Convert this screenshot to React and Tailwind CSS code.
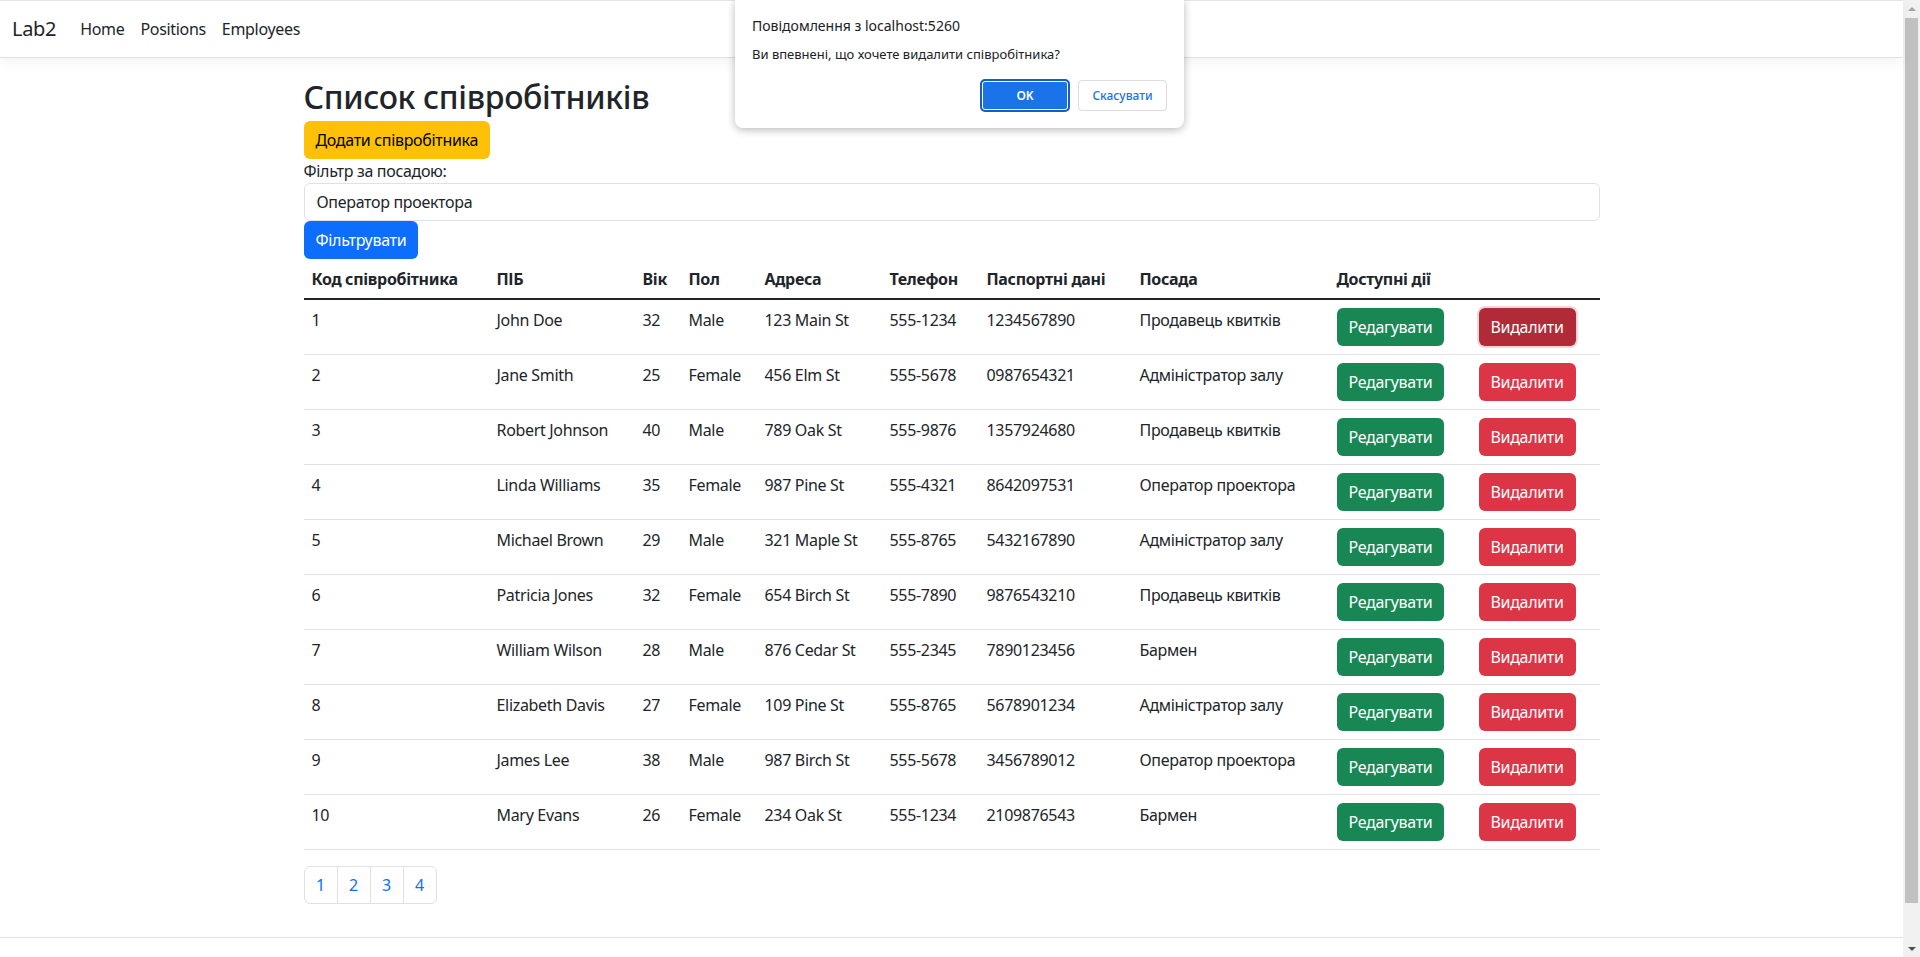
import React from "react";

const employees = [
  { id: 1, name: "John Doe", age: 32, sex: "Male", address: "123 Main St", phone: "555-1234", passport: "1234567890", position: "Продавець квитків" },
  { id: 2, name: "Jane Smith", age: 25, sex: "Female", address: "456 Elm St", phone: "555-5678", passport: "0987654321", position: "Адміністратор залу" },
  { id: 3, name: "Robert Johnson", age: 40, sex: "Male", address: "789 Oak St", phone: "555-9876", passport: "1357924680", position: "Продавець квитків" },
  { id: 4, name: "Linda Williams", age: 35, sex: "Female", address: "987 Pine St", phone: "555-4321", passport: "8642097531", position: "Оператор проектора" },
  { id: 5, name: "Michael Brown", age: 29, sex: "Male", address: "321 Maple St", phone: "555-8765", passport: "5432167890", position: "Адміністратор залу" },
  { id: 6, name: "Patricia Jones", age: 32, sex: "Female", address: "654 Birch St", phone: "555-7890", passport: "9876543210", position: "Продавець квитків" },
  { id: 7, name: "William Wilson", age: 28, sex: "Male", address: "876 Cedar St", phone: "555-2345", passport: "7890123456", position: "Бармен" },
  { id: 8, name: "Elizabeth Davis", age: 27, sex: "Female", address: "109 Pine St", phone: "555-8765", passport: "5678901234", position: "Адміністратор залу" },
  { id: 9, name: "James Lee", age: 38, sex: "Male", address: "987 Birch St", phone: "555-5678", passport: "3456789012", position: "Оператор проектора" },
  { id: 10, name: "Mary Evans", age: 26, sex: "Female", address: "234 Oak St", phone: "555-1234", passport: "2109876543", position: "Бармен" },
];

const Navbar = () => (
  <nav className="border-t border-t-[#e5e5e5] border-b border-b-[#dee2e6] bg-white shadow-[0_4px_12px_rgba(0,0,0,0.05)] tracking-[-0.02em]">
    <div className="flex items-center h-[56px] px-3">
      <span className="text-[20px] leading-[30px] text-[#212529] mr-4">Lab2</span>
      <a className="px-2 text-[#212529] leading-6">Home</a>
      <a className="px-2 text-[#212529] leading-6">Positions</a>
      <a className="px-2 text-[#212529] leading-6">Employees</a>
    </div>
  </nav>
);

const ConfirmDialog = () => (
  <div className="absolute left-[735px] top-0 w-[449px] h-[128px] bg-white rounded-b-lg shadow-[0_2px_8px_rgba(0,0,0,0.28)] px-[17px] font-['Segoe_UI','Noto_Sans',sans-serif]">
    <div className="pt-[16px] text-[14px] leading-[20px] text-[#202124]">
      Повідомлення з localhost:5260
    </div>
    <div className="pt-[9px] text-[13px] leading-[18px] text-[#202124]">
      Ви впевнені, що хочете видалити співробітника?
    </div>
    <div className="flex justify-end items-center gap-2 mt-[16px]">
      <button className="w-[90px] h-[33px] rounded-[5px] border-2 border-[#1a5dc2] bg-[#1a73e8] shadow-[inset_0_0_0_1px_white] text-white text-[12px] font-semibold">
        OK
      </button>
      <button className="w-[89px] h-[31px] rounded-[4px] border border-[#dadce0] bg-white text-[#1a73e8] text-[12px] font-medium">
        Скасувати
      </button>
    </div>
  </div>
);

const EmployeesTable = () => (
  <table className="w-full border-collapse text-[16px] leading-6 text-[#212529]">
    <thead>
      <tr className="border-b-2 border-[#212529]">
        <th className="w-[185px] px-2 pt-2 pb-[7px] text-left font-bold">Код співробітника</th>
        <th className="w-[146px] px-2 pt-2 pb-[7px] text-left font-bold">ПІБ</th>
        <th className="w-[46px] px-2 pt-2 pb-[7px] text-left font-bold">Вік</th>
        <th className="w-[76px] px-2 pt-2 pb-[7px] text-left font-bold">Пол</th>
        <th className="w-[125px] px-2 pt-2 pb-[7px] text-left font-bold">Адреса</th>
        <th className="w-[97px] px-2 pt-2 pb-[7px] text-left font-bold">Телефон</th>
        <th className="w-[153px] px-2 pt-2 pb-[7px] text-left font-bold">Паспортні дані</th>
        <th className="w-[197px] px-2 pt-2 pb-[7px] text-left font-bold">Посада</th>
        <th className="w-[142px] px-2 pt-2 pb-[7px] text-left font-bold">Доступні дії</th>
        <th className="w-[129px] px-2 pt-2 pb-[7px] text-left font-bold"></th>
      </tr>
    </thead>
    <tbody>
      {employees.map((emp, idx) => (
        <tr key={emp.id} className="border-b border-[#dee2e6] align-top">
          <td className="px-2 py-2">{emp.id}</td>
          <td className="px-2 py-2">{emp.name}</td>
          <td className="px-2 py-2">{emp.age}</td>
          <td className="px-2 py-2">{emp.sex}</td>
          <td className="px-2 py-2">{emp.address}</td>
          <td className="px-2 py-2">{emp.phone}</td>
          <td className="px-2 py-2">{emp.passport}</td>
          <td className="px-2 py-2">{emp.position}</td>
          <td className="px-2 py-2">
            <button className="h-[38px] px-3 rounded-[6px] bg-[#198754] text-white leading-6">
              Редагувати
            </button>
          </td>
          <td className="px-2 py-2">
            {idx === 0 ? (
              <button className="h-[38px] px-3 rounded-[6px] bg-[#b02a37] text-white leading-6 shadow-[0_0_0_2px_rgba(225,83,97,0.25)]">
                Видалити
              </button>
            ) : (
              <button className="h-[38px] px-3 rounded-[6px] bg-[#dc3545] text-white leading-6">
                Видалити
              </button>
            )}
          </td>
        </tr>
      ))}
    </tbody>
  </table>
);

const Pagination = () => (
  <div className="flex">
    {[1, 2, 3, 4].map((n, i) => (
      <a
        key={n}
        className={
          i === 0
            ? "w-[34px] h-[38px] flex items-center justify-center border border-[#dee2e6] rounded-l-[6px] text-[#0d6efd]"
            : i === 3
            ? "w-[34px] h-[38px] flex items-center justify-center border border-[#dee2e6] -ml-px rounded-r-[6px] text-[#0d6efd]"
            : "w-[34px] h-[38px] flex items-center justify-center border border-[#dee2e6] -ml-px text-[#0d6efd]"
        }
      >
        {n}
      </a>
    ))}
  </div>
);

const Scrollbar = () => (
  <div className="w-[17px] h-full bg-[#f1f1f1] flex flex-col items-center">
    <div className="h-[17px] flex items-center justify-center">
      <div className="w-0 h-0 border-l-[4px] border-r-[4px] border-b-[4px] border-l-transparent border-r-transparent border-b-[#a3a3a3]"></div>
    </div>
    <div className="w-[13px] h-[885px] bg-[#c1c1c1] mt-[1px]"></div>
    <div className="flex-1"></div>
    <div className="h-[17px] flex items-center justify-center">
      <div className="w-0 h-0 border-l-[4px] border-r-[4px] border-t-[4px] border-l-transparent border-r-transparent border-t-[#505050]"></div>
    </div>
  </div>
);

export default function App() {
  return (
    <div className="flex w-full h-[957px] overflow-hidden bg-white font-['Segoe_UI','Noto_Sans',sans-serif] text-[16px] leading-6 text-[#212529]">
      <div className="relative flex-1 flex flex-col">
        <Navbar />
        <main className="flex-1 w-[1320px] mx-auto px-3 mt-[17px] tracking-[-0.02em]">
          <h2 className="text-[32px] leading-[38.4px] font-medium pt-[3px] mb-[5px]">Список співробітників</h2>
          <button className="h-[38px] px-3 rounded-[6px] bg-[#ffc107] text-black leading-6">
            Додати співробітника
          </button>
          <div>Фільтр за посадою:</div>
          <div className="h-[38px] w-full border border-[#dee2e6] rounded-[6px] px-3 flex items-center">
            Оператор проектора
          </div>
          <button className="h-[38px] px-3 rounded-[6px] bg-[#0d6efd] text-white leading-6">
            Фільтрувати
          </button>
          <div className="mb-4">
            <EmployeesTable />
          </div>
          <Pagination />
        </main>
        <footer className="h-[20px] border-t border-[#dee2e6]"></footer>
        <ConfirmDialog />
      </div>
      <Scrollbar />
    </div>
  );
}
